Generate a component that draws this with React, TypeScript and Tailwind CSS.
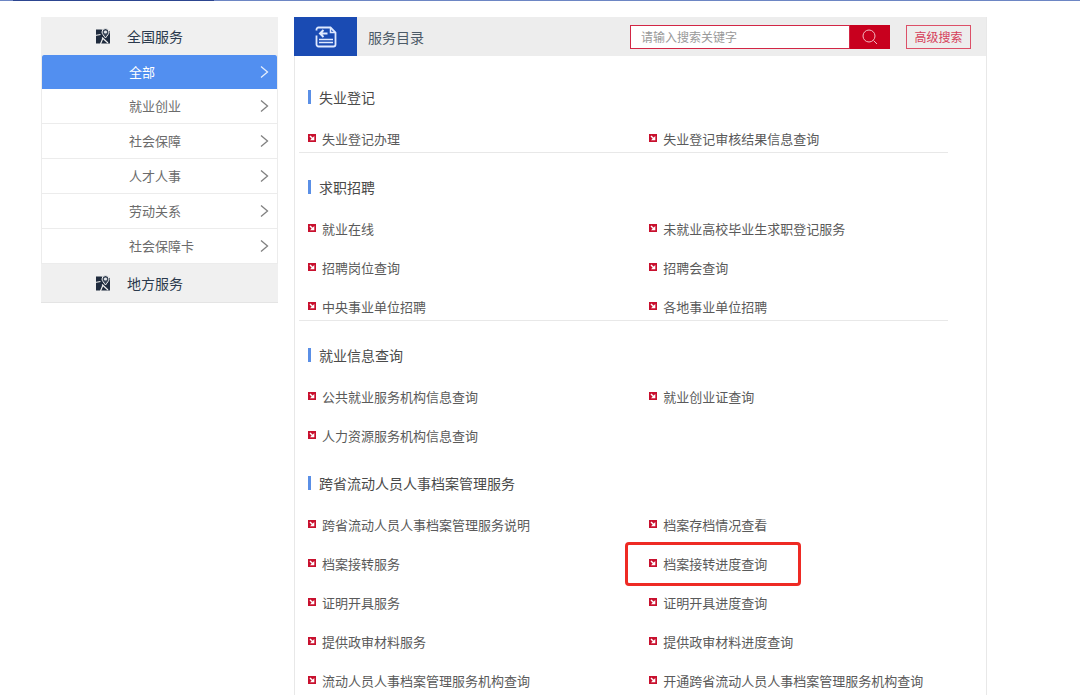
import { useState } from "react";

type Section = {
  title: string;
  items: string[];
  divider: boolean;
};

const categories = ["全部", "就业创业", "社会保障", "人才人事", "劳动关系", "社会保障卡"];

const highlighted = "档案接转进度查询";

const sections: Section[] = [
  {
    title: "失业登记",
    items: ["失业登记办理", "失业登记审核结果信息查询"],
    divider: true,
  },
  {
    title: "求职招聘",
    items: [
      "就业在线",
      "未就业高校毕业生求职登记服务",
      "招聘岗位查询",
      "招聘会查询",
      "中央事业单位招聘",
      "各地事业单位招聘",
    ],
    divider: true,
  },
  {
    title: "就业信息查询",
    items: ["公共就业服务机构信息查询", "就业创业证查询", "人力资源服务机构信息查询"],
    divider: false,
  },
  {
    title: "跨省流动人员人事档案管理服务",
    items: [
      "跨省流动人员人事档案管理服务说明",
      "档案存档情况查看",
      "档案接转服务",
      "档案接转进度查询",
      "证明开具服务",
      "证明开具进度查询",
      "提供政审材料服务",
      "提供政审材料进度查询",
      "流动人员人事档案管理服务机构查询",
      "开通跨省流动人员人事档案管理服务机构查询",
    ],
    divider: false,
  },
];

function MapIcon() {
  return (
    <svg width="16" height="16" viewBox="0 0 16 16" aria-hidden="true">
      <path d="M1 1.500h5l9 1.500v12.500H1Z" fill="#1f2b3d" />
      <path d="M0 7.500 5.500 6.500M5.500 16l2.500-6M7 9.500l6 5.500" fill="none" stroke="#f0f0f0" strokeWidth="1.200" />
      <path
        d="M10.500 10C8.500 7.200 7 5.800 7 4a3.500 3.500 0 0 1 7 0c0 1.800-1.500 3.200-3.500 6Z"
        fill="#3a4657"
        stroke="#f0f0f0"
        strokeWidth="1"
      />
      <circle cx="10.500" cy="4" r="1.600" fill="#e4e7eb" />
    </svg>
  );
}

function Chevron() {
  return (
    <svg width="9" height="14" viewBox="0 0 9 14" fill="none" stroke="currentColor" strokeWidth="1.300" opacity="0.850" aria-hidden="true">
      <path d="m1 1.500 6.500 5.500L1 12.500" />
    </svg>
  );
}

function CatalogIcon() {
  return (
    <svg width="22" height="22" viewBox="0 0 22 22" fill="none" stroke="#dfe9ff" aria-hidden="true">
      <path d="M1.500 4.500V3.500a2 2 0 0 1 2-2H15.500l5 5v12a2 2 0 0 1-2 2h-15a2 2 0 0 1-2-2V9.500" strokeWidth="1.800" />
      <path d="M15.500 1.500v5h5" strokeWidth="1.500" />
      <path d="M12.500 7.500H5M8.500 4l-3.500 3.500L8.500 11" strokeWidth="2" />
      <path d="M4 13.500h14M4 16.500h14" strokeWidth="1.600" />
    </svg>
  );
}

function Bullet() {
  return (
    <svg className="mb-0.5 shrink-0" width="8" height="8" viewBox="0 0 8 8" aria-hidden="true">
      <path d="M0 0h8v8H0z" fill="#c8102e" />
      <path d="m2 2 3 3" stroke="#fff" strokeWidth="1.400" />
      <path d="M6.300 2v4.300H2Z" fill="#fff" />
    </svg>
  );
}

function ServiceSection({ title, items, divider }: Section) {
  return (
    <section
      className={
        divider
          ? "ml-1 mr-[38px] border-b border-[#e8e8e8] pb-px pl-[9px] pt-[22px]"
          : "ml-1 mr-[38px] pb-px pl-[9px] pt-[22px]"
      }
    >
      <h2 className="flex h-6 items-center gap-2 text-sm text-[#4a4a4a]">
        <span className="h-3.5 w-[3px] bg-[#5a8fe6]" />
        {title}
      </h2>
      <ul className="mt-[18px] grid grid-cols-[8fr_7fr] gap-y-[15px]">
        {items.map((item) => (
          <li key={item} className="h-6">
            <a href="#" className="relative inline-flex h-6 items-center gap-1.5 whitespace-nowrap">
              <Bullet />
              {item}
              {item === highlighted && (
                <span className="pointer-events-none absolute -bottom-2.5 -left-6 -right-[34px] -top-2.5 rounded-sm border-3 border-[#ee2a24]" />
              )}
            </a>
          </li>
        ))}
      </ul>
    </section>
  );
}

export default function App() {
  const [active, setActive] = useState("全部");
  const [keyword, setKeyword] = useState("");

  return (
    <div className="flex min-h-screen flex-col bg-white font-['Noto_Sans_CJK_SC',sans-serif] text-[13px] text-[#5a5a5a]">
      <div className="h-px bg-[#6d86c4] pl-[13px]">
        <div className="h-px w-[201px] bg-[#2c4590]" />
      </div>

      <div className="flex flex-1 items-stretch gap-4 pl-[41px] pr-[93px] pt-4">
        {/* 左侧分类 */}
        <nav className="w-[237px] shrink-0 self-start border-b border-[#e4e4e4] bg-[#f0f0f0]">
          <h2 className="flex h-[38px] items-center gap-4 pl-[54px] text-sm text-[#2b3a4d]">
            <MapIcon />
            全国服务
          </h2>
          <ul className="border-x border-[#ececec] bg-white">
            {categories.map((name) => (
              <li key={name}>
                <button
                  type="button"
                  onClick={() => setActive(name)}
                  className={
                    active === name
                      ? "flex h-[34px] w-full items-center justify-between rounded-t-xs bg-[#528ff0] pl-[87px] pr-2 text-white"
                      : "flex h-[35px] w-full items-center justify-between border-b border-[#ececec] pl-[87px] pr-2 text-[#6b6b6b]"
                  }
                >
                  {name}
                  <Chevron />
                </button>
              </li>
            ))}
          </ul>
          <h2 className="flex h-[38px] items-center gap-4 pl-[54px] text-sm text-[#2b3a4d]">
            <MapIcon />
            地方服务
          </h2>
        </nav>

        {/* 服务目录 */}
        <main className="min-w-0 flex-1 border-x border-[#e8e8e8]">
          <header className="-ml-px flex h-[39px] items-center bg-[#ededed]">
            <div className="flex h-full w-[63px] shrink-0 items-center justify-center bg-[#1a4bb3]">
              <CatalogIcon />
            </div>
            <h1 className="flex-1 pl-[11px] text-sm text-[#4d5b68]">服务目录</h1>
            <form className="flex h-6 text-xs" onSubmit={(e) => e.preventDefault()}>
              <input
                type="text"
                aria-label="请输入搜索关键字"
                placeholder="请输入搜索关键字"
                value={keyword}
                onChange={(e) => setKeyword(e.target.value)}
                className="w-[220px] border border-[#d22645] bg-white px-2.5 outline-none placeholder:text-[#999]"
              />
              <button type="submit" aria-label="搜索" className="flex w-10 items-center justify-center bg-[#c8001e]">
                <svg width="16" height="16" viewBox="0 0 16 16" fill="none" stroke="#f3b8c0" aria-hidden="true">
                  <circle cx="7" cy="7" r="6" />
                  <path d="m11.500 11.500 3.500 3.500" />
                </svg>
              </button>
              <button type="button" className="ml-4 mr-[15px] w-[65px] border border-[#dc5068] text-[#d6405a]">
                高级搜索
              </button>
            </form>
          </header>
          <div className="pt-[7px]">
            {sections.map((section) => (
              <ServiceSection key={section.title} {...section} />
            ))}
          </div>
        </main>
      </div>
    </div>
  );
}
